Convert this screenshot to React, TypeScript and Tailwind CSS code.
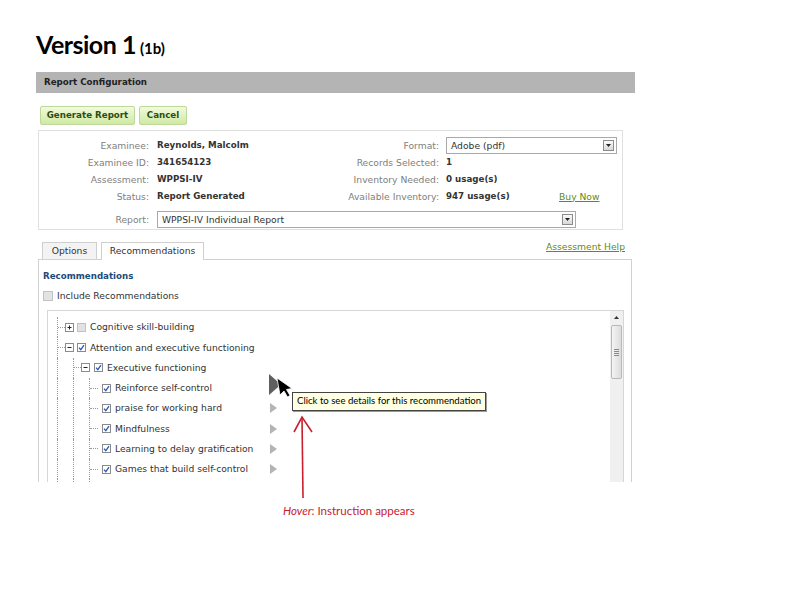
import React from 'react';

const dot = 'border-dotted border-[#9a9a9a]';

function Check({ on, size = 9 }: { on: boolean; size?: number }) {
  const s = size;
  return (
    <svg width={s} height={s} viewBox={`0 0 ${s} ${s}`} className="shrink-0">
      <rect x="0.5" y="0.5" width={s - 1} height={s - 1} fill={on ? '#fff' : '#e2e2e2'} stroke={on ? '#8a8a8a' : '#c2c2c2'} />
      {on && <path d="M2 4.6 L3.8 6.6 L7 2.2" fill="none" stroke="#2b58b5" strokeWidth="1.3" />}
    </svg>
  );
}

function Expander({ plus }: { plus: boolean }) {
  return (
    <svg width="9" height="9" viewBox="0 0 9 9" className="shrink-0">
      <rect x="0.5" y="0.5" width="8" height="8" fill="#fff" stroke="#8c8c8c" />
      <path d="M2.5 4.5 H6.5" stroke="#222" />
      {plus && <path d="M4.5 2.5 V6.5" stroke="#222" />}
    </svg>
  );
}

function Conn({ className }: { className: string }) {
  return (
    <div className={`flex h-full shrink-0 items-center border-l ${dot} ${className}`}>
      <div className={`w-full border-t ${dot}`} />
    </div>
  );
}

function Arrow({ hover }: { hover?: boolean }) {
  if (hover)
    return (
      <svg width="12" height="21" viewBox="0 0 12 21" className="mb-[8px] -ml-[1px] shrink-0">
        <path d="M0 0 L12 10.5 L0 21 Z" fill="#5f5f5f" />
      </svg>
    );
  return (
    <svg width="7" height="10" viewBox="0 0 7 10" className="shrink-0">
      <path d="M0 0 L7 5 L0 10 Z" fill="#b4b4b4" />
    </svg>
  );
}

function Select({ value, className }: { value: string; className: string }) {
  return (
    <div className={`flex h-[17px] items-center justify-between border border-[#a9a9a9] bg-white pl-[4px] pr-[2px] text-[#333] ${className}`}>
      <span>{value}</span>
      <div className="flex h-[11px] w-[11px] items-center justify-center border border-[#8c8c8c] bg-gradient-to-b from-[#fbfbfb] to-[#d8d8d8]">
        <svg width="5" height="3" viewBox="0 0 5 3">
          <path d="M0 0 H5 L2.5 3 Z" fill="#222" />
        </svg>
      </div>
    </div>
  );
}

const L3 = [
  { label: 'Reinforce self-control', hover: true },
  { label: 'praise for working hard' },
  { label: 'Mindfulness' },
  { label: 'Learning to delay gratification' },
  { label: 'Games that build self-control' },
];

export default function App() {
  return (
    <div className="relative h-[612px] w-[792px] overflow-hidden bg-white pl-[36px] pt-[32px] font-['DejaVu_Sans',Verdana,sans-serif] text-[9.2px] text-[#333]">
      <div className="flex h-[40px] items-start font-['Lato',sans-serif] font-bold leading-none text-black">
        <span className="text-[25px] tracking-[-0.5px]">Version 1</span>
        <span className="ml-[4px] mt-[9px] text-[15px]">(1b)</span>
      </div>

      <div className="w-[599px]">
        <div className="flex h-[21px] items-center bg-[#b4b4b4] pl-[8px] text-[8.7px] font-bold text-[#222]">
          Report Configuration
        </div>

        <div className="mt-[13px] flex gap-[4px] pl-[4px] text-[8.7px] font-bold text-[#2e4d12]">
          <div className="flex h-[19px] w-[95px] items-center justify-center rounded-[2px] border border-[#bcd99a] bg-gradient-to-b from-[#f2fbdc] to-[#cfe9a3]">
            Generate Report
          </div>
          <div className="flex h-[19px] w-[48px] items-center justify-center rounded-[2px] border border-[#bcd99a] bg-gradient-to-b from-[#f2fbdc] to-[#cfe9a3]">
            Cancel
          </div>
        </div>

        <div className="ml-[2px] mt-[5px] h-[100px] w-[585px] border border-[#e0e0e0] pt-[6px]">
          {[
            ['Examinee:', 'Reynolds, Malcolm', 'Format:', null],
            ['Examinee ID:', '341654123', 'Records Selected:', '1'],
            ['Assessment:', 'WPPSI-IV', 'Inventory Needed:', '0 usage(s)'],
            ['Status:', 'Report Generated', 'Available Inventory:', '947 usage(s)'],
          ].map(([l1, v1, l2, v2], i) => (
            <div key={i} className="flex h-[17px] items-center">
              <div className="w-[110px] text-right text-[#808080]">{l1}</div>
              <div className="ml-[8px] w-[180px] text-[8.7px] font-bold">{v1}</div>
              <div className="w-[102px] text-right text-[#808080]">{l2}</div>
              {v2 === null ? (
                <Select value="Adobe (pdf)" className="ml-[7px] w-[171px]" />
              ) : (
                <div className="ml-[7px] flex items-center">
                  <span className="w-[113px] text-[8.7px] font-bold">{v2}</span>
                  {i === 3 && <span className="text-[#5b8c25] underline">Buy Now</span>}
                </div>
              )}
            </div>
          ))}
          <div className="mt-[6px] flex h-[17px] items-center">
            <div className="w-[110px] text-right text-[#808080]">Report:</div>
            <Select value="WPPSI-IV Individual Report" className="ml-[8px] w-[419px]" />
          </div>
        </div>

        <div className="ml-[2px] mt-[12px] w-[594px]">
          <div className="relative z-10 flex h-[17px] items-end pl-[4px]">
            <div className="flex h-[17px] w-[55px] items-center justify-center border border-b-0 border-[#cfcfcf] bg-[#f3f3f3]">
              Options
            </div>
            <div className="-mb-px ml-[4px] flex h-[18px] w-[103px] items-center justify-center border border-b-0 border-[#cfcfcf] bg-white pb-px">
              Recommendations
            </div>
            <span className="mb-[8px] ml-auto mr-[7px] leading-none text-[#5b8c25] underline">Assessment Help</span>
          </div>

          <div className="h-[223px] overflow-hidden border-x border-t border-[#d2d2d2] pl-[8px] pr-[7px]">
            <div className="-ml-[4px] mt-[11px] flex h-[12px] items-center text-[8.7px] font-bold text-[#1d4a78]">
              Recommendations
            </div>
            <div className="-ml-[4px] mt-[7px] flex h-[12px] items-center gap-[4px]">
              <Check on={false} size={10} />
              <span>Include Recommendations</span>
            </div>

            <div className="mt-[8px] flex h-[200px] border border-[#d6d6d6]">
              <div className="flex-1 pt-[6px]">
                <div className="flex h-[20.3px] items-center">
                  <div className="w-[9px] shrink-0" />
                  <Conn className="w-[8px]" />
                  <Expander plus />
                  <div className="w-[3px] shrink-0" />
                  <Check on={false} />
                  <span className="ml-[4px]">Cognitive skill-building</span>
                </div>
                <div className="flex h-[20.3px] items-center">
                  <div className="w-[9px] shrink-0" />
                  <Conn className="w-[8px]" />
                  <Expander plus={false} />
                  <div className="w-[3px] shrink-0" />
                  <Check on />
                  <span className="ml-[4px]">Attention and executive functioning</span>
                </div>
                <div className="flex h-[20.3px] items-center">
                  <div className="w-[9px] shrink-0" />
                  <div className={`h-full w-[16px] shrink-0 border-l ${dot}`} />
                  <Conn className="w-[8px]" />
                  <Expander plus={false} />
                  <div className="w-[4px] shrink-0" />
                  <Check on />
                  <span className="ml-[4px]">Executive functioning</span>
                </div>
                {L3.map((r) => (
                  <div key={r.label} className="flex h-[20.3px] items-center">
                    <div className="w-[9px] shrink-0" />
                    <div className={`h-full w-[16px] shrink-0 border-l ${dot}`} />
                    <div className={`h-full w-[16px] shrink-0 border-l ${dot}`} />
                    <Conn className="w-[9px]" />
                    <div className="w-[4px] shrink-0" />
                    <Check on />
                    <span className="ml-[4px] w-[155px] shrink-0 whitespace-nowrap">{r.label}</span>
                    <Arrow hover={r.hover} />
                  </div>
                ))}
                <div className="flex h-[20.3px]">
                  <div className="w-[9px] shrink-0" />
                  <div className={`h-full w-[16px] shrink-0 border-l ${dot}`} />
                  <div className={`h-full w-[16px] shrink-0 border-l ${dot}`} />
                  <div className={`h-full w-[9px] shrink-0 border-l ${dot}`} />
                </div>
              </div>

              <div className="flex w-[13px] flex-col bg-[#f0f0f0]">
                <div className="flex h-[12px] items-center justify-center">
                  <svg width="5" height="3" viewBox="0 0 5 3">
                    <path d="M0 3 H5 L2.5 0 Z" fill="#333" />
                  </svg>
                </div>
                <div className="mx-[1px] mt-[2px] flex h-[54px] items-center justify-center rounded-[2px] border border-[#b9b9b9] bg-gradient-to-r from-[#f4f4f4] to-[#dcdcdc]">
                  <div className="flex flex-col gap-[1px]">
                    <div className="h-px w-[5px] bg-[#8a8a8a]" />
                    <div className="h-px w-[5px] bg-[#8a8a8a]" />
                    <div className="h-px w-[5px] bg-[#8a8a8a]" />
                    <div className="h-px w-[5px] bg-[#8a8a8a]" />
                  </div>
                </div>
              </div>
            </div>
          </div>
        </div>
      </div>

      {/* hover annotation overlays */}
      <svg className="absolute left-[276px] top-[377px]" width="18" height="22" viewBox="0 0 18 22">
        <path d="M1 1 L16 11.5 L10.5 12.5 L14 18.5 L11.5 20 L8 14 L4 18 Z" fill="#000" stroke="#fff" strokeWidth="0.8" />
      </svg>

      <div className="absolute left-[292px] top-[392px] flex h-[19px] w-[194px] items-center whitespace-nowrap border border-[#444] bg-[#ffffe3] pl-[4px] font-['Lato',sans-serif] text-[9.6px] text-black shadow-[1px_1px_0_#9a9a9a]">
        Click to see details for this recommendation
      </div>

      <svg className="absolute left-[290px] top-[414px]" width="26" height="86" viewBox="0 0 26 86">
        <path d="M12 3 L13 84" stroke="#c8202f" strokeWidth="1.6" fill="none" />
        <path d="M4 18 L12 3 L22 18" stroke="#c8202f" strokeWidth="1.6" fill="none" />
      </svg>

      <div className="absolute left-[283px] top-[502px] font-['Lato',sans-serif] text-[11.5px] text-[#c8202f]">
        <span className="italic">Hover</span>: Instruction appears
      </div>
    </div>
  );
}
